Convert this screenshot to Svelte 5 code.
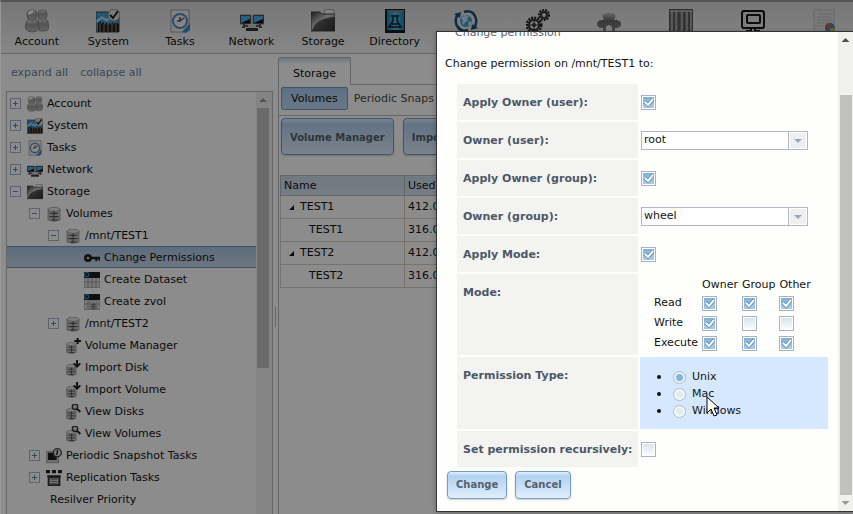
<script>
	const toolbar = [
		{ icon: "account", label: "Account" },
		{ icon: "system", label: "System" },
		{ icon: "tasks", label: "Tasks" },
		{ icon: "network", label: "Network" },
		{ icon: "storage", label: "Storage" },
		{ icon: "directory", label: "Directory" },
		{ icon: "sharing" },
		{ icon: "services" },
		{ icon: "plugins" },
		{ icon: "jails" },
		{ icon: "display" },
		{ icon: "reporting" },
	];

	const tree = [
		{ level: 0, toggle: "+", icon: "account", label: "Account" },
		{ level: 0, toggle: "+", icon: "system", label: "System" },
		{ level: 0, toggle: "+", icon: "tasks", label: "Tasks" },
		{ level: 0, toggle: "+", icon: "network", label: "Network" },
		{ level: 0, toggle: "-", icon: "storage", label: "Storage" },
		{ level: 1, toggle: "-", icon: "disk", label: "Volumes" },
		{ level: 2, toggle: "-", icon: "disk", label: "/mnt/TEST1" },
		{ level: 3, icon: "key", label: "Change Permissions", selected: true },
		{ level: 3, icon: "dataset", label: "Create Dataset" },
		{ level: 3, icon: "zvol", label: "Create zvol" },
		{ level: 2, toggle: "+", icon: "disk", label: "/mnt/TEST2" },
		{ level: 2, icon: "disk-add", label: "Volume Manager" },
		{ level: 2, icon: "disk-import", label: "Import Disk" },
		{ level: 2, icon: "disk-import", label: "Import Volume" },
		{ level: 2, icon: "disk-view", label: "View Disks" },
		{ level: 2, icon: "disk-view", label: "View Volumes" },
		{ level: 1, toggle: "+", icon: "snapshot", label: "Periodic Snapshot Tasks" },
		{ level: 1, toggle: "+", icon: "replication", label: "Replication Tasks" },
		{ level: 1, label: "Resilver Priority" },
	];

	const volumes = [
		{ name: "TEST1", used: "412.0", root: true },
		{ name: "TEST1", used: "316.0" },
		{ name: "TEST2", used: "412.0", root: true },
		{ name: "TEST2", used: "316.0" },
	];

	const who = ["Owner", "Group", "Other"];

	let applyUser = $state(true);
	let applyGroup = $state(true);
	let applyMode = $state(true);
	let recursive = $state(false);
	let user = $state("root");
	let group = $state("wheel");
	let permType = $state("Unix");
	let mode = $state([
		{ name: "Read", bits: [true, true, true] },
		{ name: "Write", bits: [true, false, false] },
		{ name: "Execute", bits: [true, true, true] },
	]);
</script>

{#snippet cylinder()}
	<path d="M3 5v16q9 4 18 0V5z" fill="#c4c4c4" stroke="#888" />
	<ellipse cx="12" cy="5" rx="9" ry="3" fill="#e8e8e8" stroke="#888" />
	<path d="M12 8v13M6 11h12M5 16h14M8 21h9" stroke="#444" stroke-width="1.5" fill="none" />
{/snippet}

{#snippet icon(name)}
	<svg class="icon" viewBox="0 0 24 24" aria-hidden="true">
		{#if name === "account"}
			<g fill="url(#silver)" stroke="#777" stroke-width=".7">
				<path d="M13 11q0-2 2-2h5q3 2 3.500 6v5q-1 2-5 2h-4z" />
				<rect x="13" y="1" width="9" height="9" rx="3.500" />
				<path d="M4 10h6q3 2 3.500 6v4q-1 3-6 3t-7-3v-4q0-4 3.500-6z" />
				<rect x="2" y="1" width="10" height="10" rx="4" />
			</g>
			<path d="M3 5q0-3 3-3.500h3Q8 5 3 6z" fill="#fff" />
		{:else if name === "system"}
			<path d="M0 3h23v20H0z" fill="#4497d0" stroke="#444" />
			<path d="M0 11L6 7l5 3 5-4v3l-5 4-5-3-5 4z" fill="#9cd9fa" />
			<path d="M2 23V14l3-2v3l3-2v3l3-3v3l3-2v2l3-3v3l2-2 4 1v8z" fill="#222" />
			<path d="M4 14v9m4-8v8m4-8v8m4-8v8m4-8v8" stroke="#a87e5e" fill="none" />
			<circle cx="18" cy="6" r="6" fill="#ddd" stroke="#888" />
			<path d="M14 6l3 3 5-7" fill="none" stroke="#222" stroke-width="2" />
		{:else if name === "tasks"}
			<path d="M3 1h18v17l-5 5H3z" fill="#e7e9e9" stroke="#999" />
			<path d="M14 23l8-9v7l-4 3z" fill="#3491c8" />
			<circle cx="12" cy="12" r="7" fill="#f4f4f4" stroke="#548abb" stroke-width="2" />
			<path d="M12 8v4H9m3 0l4-3" fill="none" stroke="#555" stroke-width="1.5" />
		{:else if name === "network"}
			<path d="M0 6h11v9H0zm13 0h11v9H13z" fill="#111" stroke="#888" />
			<path d="M1 7h9v3l-9 4zm13 0h9v3l-9 4z" fill="#48aee9" />
			<path d="M4 15v3H2m18-3v3h2M4 17h16" stroke="#555" stroke-width="2" fill="none" />
			<path d="M8 15h8v4H8z" fill="#ccc" />
			<path d="M6 19h12v3H6z" fill="#333" />
		{:else if name === "storage"}
			<path d="M12 9l2-9 9 1v9z" fill="#eee" stroke="#999" />
			<path d="M0 3h9l2 2h13v17H0z" fill="url(#folder)" stroke="#444" />
			<path d="M1 22q3-13 23-14v14z" fill="#333" opacity=".75" />
		{:else if name === "directory"}
			<path d="M2 0h20v24H2z" fill="#171b1e" />
			<path d="M4 3h17v18H4z" fill="url(#book)" />
			<path d="M4 2h17" stroke="#ddd" />
			<path d="M8 7h8M10 8v4l-4 6h12l-4-6V8m-5 7h6" fill="none" stroke="#171b1e" stroke-width="1.5" />
		{:else if name === "sharing"}
			<circle cx="12" cy="12" r="6" fill="#479bcc" />
			<path d="M7 9l4-3 4 1-2 3 1 2-3 1-1 3-2-2 1-2zM15 12l3 1-2 4-2-1z" fill="#bee6f6" />
			<path d="M4 5Q0 11 3 17l4 4M20 19q4-6 1-12l-3-4M10 3q6-2 10 2M14 21q-6 2-10-2" fill="none" stroke="#195079" stroke-width="2.500" />
			<path d="M0 5l7-2-1 6zM24 19l-7 2 1-6z" fill="#195079" />
		{:else if name === "services"}
			<circle cx="8" cy="16" r="7" fill="none" stroke="#222" stroke-width="3" stroke-dasharray="2 1" />
			<circle cx="8" cy="16" r="5" fill="none" stroke="#333" stroke-width="2" />
			<path d="M8 12v8M4 16h8" stroke="#333" />
			<circle cx="8" cy="16" r="2" fill="#333" />
			<circle cx="18" cy="6" r="5" fill="none" stroke="#222" stroke-width="2" stroke-dasharray="2 1" />
			<circle cx="18" cy="6" r="3" fill="none" stroke="#333" stroke-width="2" />
		{:else if name === "plugins"}
			<path d="M6 5q6-2 12 0 1 4-1 6h3q4 1 4 4t-4 4h-2v5h-3v-6q-3-4-6 0v6H6v-5H4q-4-1-4-4t4-4h3Q5 9 6 5z" fill="url(#steel)" />
		{:else if name === "jails"}
			<path d="M0 0h24v24H0z" fill="#777" stroke="#333" />
			<path d="M1 2h22M3 2v22m4-22v22m6-22v22m5-22v22m4-22v22" stroke="#ccc" />
			<path d="M5 3v21m5-21v21m5-21v21m5-21v21" stroke="#444" />
		{:else if name === "display"}
			<rect x="1" y="2" width="22" height="17" rx="2" fill="none" stroke="#151515" stroke-width="2" />
			<rect x="6" y="6" width="13" height="8" rx="1" fill="none" stroke="#151515" stroke-width="2" />
			<path d="M10 19v3H5m9-3v3h5" stroke="#151515" stroke-width="2" fill="none" />
		{:else if name === "reporting"}
			<path d="M2 1h20v23H2z" fill="#ddd" stroke="#bbb" />
			<path d="M6 5h13M5 8h15M5 11h15M5 14h15M5 17h7" stroke="#bbb" />
			<circle cx="18" cy="19" r="5" fill="#3f86c5" />
			<path d="M18 19l-5 0q0-5 5-5z" fill="#d6563e" />
			<path d="M18 19h5q0 5-6 5z" fill="#d2ab42" />
		{:else if name === "disk"}
			{@render cylinder()}
		{:else if name === "key"}
			<circle cx="6" cy="12" r="4" fill="none" stroke="#222" stroke-width="4" />
			<path d="M10 10h14v6h-2v-2h-2v3h-3v-3h-7z" fill="#222" />
		{:else if name === "dataset" || name === "zvol"}
			<path d="M0 1h24v22H0z" fill="#ddd" stroke="#888" />
			<path d="M0 15h24M6 9v14m6-14v14m6-14v14" stroke="#888" fill="none" />
			<path d="M0 0h24v9H0z" fill="#1c1c1c" />
			<circle cx="4" cy="4" r="3" fill="none" stroke="#2e93bd" stroke-width="2" />
			{#if name === "zvol"}
				<g transform="translate(7 9) scale(.6)">{@render cylinder()}</g>
			{/if}
		{:else if name.startsWith("disk-")}
			<g transform="translate(0 5) scale(.8)">{@render cylinder()}</g>
			{#if name === "disk-add"}
				<path d="M19 0v9M14 4.500h10" stroke="#222" stroke-width="3" />
			{:else if name === "disk-import"}
				<path d="M18 0v8M13 5l5 5 5-5" fill="none" stroke="#222" stroke-width="3" />
			{:else}
				<circle cx="15" cy="4" r="4" fill="#ddd" stroke="#333" stroke-width="2" />
				<path d="M18 7l5 5" stroke="#222" stroke-width="3" />
			{/if}
		{:else if name === "snapshot"}
			<path d="M1 5h18v17H1z" fill="#ccc" stroke="#888" />
			<path d="M3 7h13v11H3z" fill="#1c1c1c" />
			<circle cx="17" cy="7" r="6" fill="#ddd" stroke="#444" stroke-width="2" />
			<path d="M17 3v5l-2 2" fill="none" stroke="#222" stroke-width="2" />
		{:else if name === "replication"}
			<path d="M0 0h6v5H0zm9 0h6v5H9zm9 0h6v5h-6zM2 8h20v3H2z" fill="#222" />
			<path d="M4 11h16v12H4z" fill="#ddd" stroke="#333" stroke-width="3" />
			<path d="M7 14h10M7 17h10M7 20h10" stroke="#333" />
		{/if}
	</svg>
{/snippet}

<svg class="defs" width="0" height="0" aria-hidden="true">
	<linearGradient id="silver" x2="0" y2="1">
		<stop stop-color="#ddd" /><stop offset=".45" stop-color="#999" /><stop offset="1" stop-color="#bbb" />
	</linearGradient>
	<linearGradient id="steel" x2="0" y2="1">
		<stop stop-color="#bbb" /><stop offset=".4" stop-color="#666" /><stop offset="1" stop-color="#888" />
	</linearGradient>
	<linearGradient id="folder" x2="1" y2="1">
		<stop stop-color="#333" /><stop offset=".45" stop-color="#ccc" /><stop offset="1" stop-color="#222" />
	</linearGradient>
	<linearGradient id="book">
		<stop stop-color="#1682b6" /><stop offset=".5" stop-color="#51bce9" /><stop offset="1" stop-color="#1682b6" />
	</linearGradient>
</svg>

<div class="page">
	<nav class="toolbar">
		{#each toolbar as item}
			<a href="#{item.icon}" aria-label={item.icon}>
				{@render icon(item.icon)}
				{#if item.label}<span>{item.label}</span>{/if}
			</a>
		{/each}
	</nav>

	<div class="body">
		<aside>
			<div class="links">
				<a href="#expand">expand all</a>
				<a href="#collapse">collapse all</a>
			</div>
			<div class="tree">
				<ul>
					{#each tree as node}
						<li class:selected={node.selected} style="padding-left: {3 + node.level * 19}px">
							<span class="toggle" class:boxed={node.toggle} class:plus={node.toggle === "+"}></span>
							{#if node.icon}{@render icon(node.icon)}{/if}
							<span class="label">{node.label}</span>
						</li>
					{/each}
				</ul>
				<div class="tree-scroll">
					<i class="up"></i>
					<div class="thumb"></div>
				</div>
			</div>
		</aside>
		<div class="splitter"><i></i></div>

		<main>
			<div class="tabs"><button class="tab">Storage</button></div>
			<div class="pane">
				<div class="subtabs">
					<button class="active">Volumes</button>
					<button>Periodic Snaps</button>
				</div>
				<div class="actions">
					<button class="btn">Volume Manager</button>
					<button class="btn">Import</button>
				</div>
				<table class="grid">
					<thead>
						<tr><th>Name</th><th>Used</th></tr>
					</thead>
					<tbody>
						{#each volumes as v}
							<tr>
								<td class:child={!v.root}>{#if v.root}<i class="expando"></i>{/if}{v.name}</td>
								<td>{v.used}</td>
							</tr>
						{/each}
					</tbody>
				</table>
			</div>
		</main>
	</div>

	<div class="underlay"></div>

	<div class="dialog" role="dialog" aria-label="Change permission">
		<form>
			<div class="title"><span>Change permission</span></div>
			<p>Change permission on /mnt/TEST1 to:</p>
			<div class="fields">
				<label class="name" for="apply-user">Apply Owner (user):</label>
				<div class="value"><input type="checkbox" id="apply-user" bind:checked={applyUser} /></div>

				<label class="name" for="user">Owner (user):</label>
				<div class="value">
					<select id="user" bind:value={user}><option>root</option></select>
				</div>

				<label class="name" for="apply-group">Apply Owner (group):</label>
				<div class="value"><input type="checkbox" id="apply-group" bind:checked={applyGroup} /></div>

				<label class="name" for="group">Owner (group):</label>
				<div class="value">
					<select id="group" bind:value={group}><option>wheel</option></select>
				</div>

				<label class="name" for="apply-mode">Apply Mode:</label>
				<div class="value"><input type="checkbox" id="apply-mode" bind:checked={applyMode} /></div>

				<div class="name">Mode:</div>
				<div class="value">
					<table class="mode">
						<thead>
							<tr>
								<td></td>
								{#each who as w}<th>{w}</th>{/each}
							</tr>
						</thead>
						<tbody>
							{#each mode as row}
								<tr>
									<th>{row.name}</th>
									{#each row.bits as _, i}
										<td><input type="checkbox" aria-label="{who[i]} {row.name}" bind:checked={row.bits[i]} /></td>
									{/each}
								</tr>
							{/each}
						</tbody>
					</table>
				</div>

				<div class="name">Permission Type:</div>
				<div class="value hovered">
					<ul class="types">
						{#each ["Unix", "Mac", "Windows"] as t}
							<li><label><input type="radio" name="type" value={t} bind:group={permType} />{t}</label></li>
						{/each}
					</ul>
				</div>

				<label class="name" for="recursive">Set permission recursively:</label>
				<div class="value"><input type="checkbox" id="recursive" bind:checked={recursive} /></div>
			</div>
			<div class="buttons">
				<button type="button" class="btn">Change</button>
				<button type="button" class="btn">Cancel</button>
			</div>
		</form>
		<div class="dialog-scroll">
			<i class="up"></i>
			<div class="thumb"></div>
			<i class="down"></i>
		</div>
		<svg class="pointer" width="14" height="22" viewBox="0 0 14 22" aria-hidden="true">
			<path d="M1 1v16l4-4 3 7 3-1-3-7h5z" fill="#fff" stroke="#000" />
		</svg>
	</div>
</div>

<style>
	:global(body) {
		margin: 0;
	}

	.page {
		position: relative;
		display: flex;
		flex-direction: column;
		height: 100vh;
		box-sizing: border-box;
		overflow: hidden;
		border-top: 2px solid #555;
		border-left: 1px solid #999;
		background: #fff;
		color: #131313;
		font: 11px/16px "DejaVu Sans", Verdana, sans-serif;
	}

	.defs {
		position: absolute;
	}

	button,
	select {
		font: inherit;
		color: inherit;
	}

	ul {
		list-style: none;
		margin: 0;
		padding: 0;
	}

	/* toolbar */
	.toolbar {
		display: grid;
		grid-template-columns: repeat(12, 1fr);
		flex: none;
		height: 51px;
		margin-right: -7px;
		border-bottom: 1px solid #bbb;
		background: linear-gradient(#d8d8d8, #f6f6f6);
	}

	.toolbar a {
		display: flex;
		flex-direction: column;
		align-items: center;
		gap: 1px;
		padding-top: 7px;
		color: #131313;
		text-decoration: none;
	}

	.toolbar .icon {
		width: 24px;
		height: 24px;
	}

	.body {
		display: flex;
		flex: 1;
		min-height: 0;
	}

	/* left pane */
	aside {
		display: flex;
		flex-direction: column;
		width: 267px;
		padding-left: 5px;
	}

	.links {
		display: flex;
		gap: 12px;
		padding: 11px 5px 10px;
	}

	.links a {
		color: #6684a6;
		text-decoration: none;
	}

	.tree {
		display: flex;
		flex: 1;
		min-height: 0;
		overflow: hidden;
		border: 1px solid #bbb;
		border-bottom: 0;
	}

	.tree ul {
		flex: 1;
	}

	.tree li {
		display: flex;
		align-items: center;
		height: 22px;
		box-sizing: border-box;
		white-space: nowrap;
	}

	.tree li.selected {
		border: solid #759dc0;
		border-width: 1px 0;
		background: linear-gradient(#a9c5e4, #c9d9ea);
	}

	.tree .icon {
		flex: none;
		width: 16px;
		height: 16px;
		margin-top: 2px;
	}

	.tree .label {
		margin-left: 4px;
		padding-top: 2px;
	}

	.toggle {
		box-sizing: border-box;
		flex: none;
		width: 11px;
		height: 11px;
		margin: 1px 6px 0 0;
	}

	.toggle.boxed {
		border: 1px solid #a5b4ca;
		background: linear-gradient(#6a83a5, #6a83a5) center / 5px 1px no-repeat;
	}

	.toggle.plus {
		background:
			linear-gradient(#6a83a5, #6a83a5) center / 5px 1px no-repeat,
			linear-gradient(#6a83a5, #6a83a5) center / 1px 5px no-repeat;
	}

	.tree-scroll {
		display: flex;
		flex-direction: column;
		align-items: center;
		width: 14px;
		padding-right: 2px;
		background: #f0f0f0;
	}

	.tree-scroll .thumb {
		width: 12px;
		height: 260px;
		background: #c1c1c1;
	}

	.up,
	.down {
		flex: none;
		width: 8px;
		height: 4px;
		margin: 6px 0;
		background: #505050;
		clip-path: polygon(50% 0, 100% 100%, 0 100%);
	}

	.tree-scroll .up {
		background: #999;
	}

	.down {
		background: #999;
		clip-path: polygon(0 0, 100% 0, 50% 100%);
	}

	.splitter {
		display: flex;
		align-items: center;
		justify-content: center;
		width: 5px;
	}

	.splitter i {
		width: 1px;
		height: 20px;
		margin-top: 66px;
		background: #b5bcc7;
	}

	/* right pane */
	main {
		flex: 1;
		display: flex;
		flex-direction: column;
		min-width: 0;
		padding-top: 3px;
	}

	.tabs {
		display: flex;
	}

	.tabs::after {
		content: "";
		flex: 1;
		border-bottom: 1px solid #b5bcc7;
	}

	.tab {
		height: 28px;
		padding: 4px 14px 0;
		border: 1px solid #b5bcc7;
		border-bottom: 0;
		border-radius: 2px 2px 0 0;
		background: linear-gradient(#c5d8ee, #fff 6px);
	}

	.pane {
		flex: 1;
		border-left: 1px solid #b5bcc7;
	}

	.subtabs {
		display: flex;
		gap: 4px;
		padding: 2px 2px 5px;
		border-bottom: 1px solid #b5bcc7;
		white-space: nowrap;
	}

	.subtabs button {
		height: 23px;
		padding: 0 2px;
		border: 0;
		background: none;
		color: #494949;
	}

	.subtabs .active {
		padding: 0 9px;
		border: 1px solid #759dc0;
		border-radius: 2px;
		background: linear-gradient(#a9cbee, #c2dcf5);
		color: #131313;
	}

	.btn {
		border: 1px solid #759dc0;
		border-radius: 4px;
		background: linear-gradient(#e4f0fc, #b2d2f3 15%, #e0eefc);
		box-shadow: 0 1px 2px rgba(0, 0, 0, 0.2);
		color: #56616b;
		font-size: 10px;
		font-weight: bold;
		white-space: nowrap;
	}

	.actions {
		display: flex;
		gap: 9px;
		padding: 2px 2px 20px;
	}

	.actions .btn {
		height: 37px;
		padding: 2px 8px 0;
	}

	.grid {
		width: 100%;
		margin-left: 1px;
		border-collapse: collapse;
		table-layout: fixed;
		border: 1px solid #b5bcc7;
	}

	.grid th,
	.grid td {
		box-sizing: border-box;
		height: 23px;
		padding: 0 3px;
		border: 1px solid #dccfc0;
		text-align: left;
		font-weight: normal;
	}

	.grid th {
		height: 20px;
		border-color: #b5bcc7;
		background: linear-gradient(#ccdbea, #d8e4f0);
	}

	.grid th:first-child {
		width: 124px;
	}

	.grid .child {
		padding-left: 28px;
	}

	.expando {
		display: inline-block;
		width: 5px;
		height: 5px;
		margin: 0 6px 0 5px;
		background: #131313;
		clip-path: polygon(100% 0, 100% 100%, 0 100%);
	}

	.underlay {
		position: absolute;
		inset: -2px 0 0 -1px;
		background: rgba(0, 0, 0, 0.45);
	}

	/* dialog */
	.dialog {
		position: absolute;
		top: 29px;
		left: 435px;
		right: 0;
		display: flex;
		border: 1px solid #333;
		border-right: 0;
		background: #fefefd;
		box-shadow: 0 1px 5px rgba(0, 0, 0, 0.25);
	}

	form {
		flex: 1;
		padding: 0 10px 12px 8px;
	}

	.title {
		display: flex;
		align-items: flex-end;
		height: 9px;
		margin-left: 10px;
		overflow: hidden;
		color: #5a6570;
	}

	p {
		margin: 15px 0 12px;
	}

	.fields {
		display: grid;
		grid-template-columns: 181px 1fr;
		gap: 2px;
		margin-left: 12px;
	}

	.name {
		padding: 11px 6px 9px;
		background: #f3f3f2;
		color: #4c5866;
		font-weight: bold;
		white-space: nowrap;
	}

	.value {
		display: flex;
		align-items: center;
		padding: 0 1px;
	}

	.hovered {
		background: #d5e8fe;
	}

	input[type="checkbox"] {
		appearance: none;
		display: block;
		box-sizing: border-box;
		width: 15px;
		height: 15px;
		margin: 0;
		border: 1px solid #a8b2c0;
		padding: 1px;
		background: linear-gradient(#d9e3ec, #fbfcfd) content-box;
	}

	input[type="checkbox"]:checked {
		background:
			url("data:image/svg+xml,%3Csvg xmlns='http://www.w3.org/2000/svg' viewBox='0 0 11 11'%3E%3Cpath d='M2 5l3 3 5-6' fill='none' stroke='%234f81a8' stroke-width='3.500'/%3E%3Cpath d='M2 5l3 3 5-6' fill='none' stroke='%23fff' stroke-width='2'/%3E%3C/svg%3E") center / 11px no-repeat,
			linear-gradient(#7fb0d8, #a8cdea) content-box;
	}

	select {
		appearance: none;
		box-sizing: border-box;
		width: 167px;
		height: 19px;
		padding: 0 22px 0 2px;
		border: 1px solid #b0b8c8;
		border-radius: 0;
		color: #131313;
		background: #fff
			url("data:image/svg+xml,%3Csvg xmlns='http://www.w3.org/2000/svg' width='19' height='17'%3E%3Cpath d='M0 0h1v17H0z' fill='%23b0b8c8'/%3E%3Cpath d='M2 1h16v15H2z' fill='%23efefef'/%3E%3Cpath d='M6 7h8l-4 4z' fill='%2393a7c8'/%3E%3C/svg%3E") right center no-repeat;
	}

	.mode {
		margin: 0 0 2px 12px;
		border-collapse: collapse;
	}

	.mode th,
	.mode td {
		height: 20px;
		padding: 0 3px 0 1px;
		font-weight: normal;
		text-align: left;
	}

	.mode thead th {
		height: 16px;
		padding-top: 3px;
	}

	.mode thead td {
		height: 16px;
	}

	.types {
		padding: 12px 0 9px 32px;
	}

	.types li {
		position: relative;
		height: 17px;
	}

	.types li::before {
		content: "";
		position: absolute;
		top: 6px;
		left: -16px;
		width: 4px;
		height: 4px;
		border-radius: 50%;
		background: #131313;
	}

	.types label {
		display: flex;
		align-items: center;
		gap: 6px;
		line-height: 16px;
	}

	input[type="radio"] {
		appearance: none;
		box-sizing: border-box;
		width: 13px;
		height: 13px;
		margin: 0;
		border: 1px solid #b0bccb;
		border-radius: 50%;
		background: radial-gradient(#e2eaf2 3px, #f5f8fb 4px);
	}

	input[type="radio"]:checked {
		background: radial-gradient(#84b4d9 3px, #e8f1f8 4px);
	}

	.buttons {
		display: flex;
		gap: 8px;
		margin: 4px 0 0 2px;
	}

	.buttons .btn {
		height: 28px;
		padding: 0 8px;
	}

	.dialog-scroll {
		display: flex;
		flex-direction: column;
		align-items: center;
		width: 15px;
		background: #f0f0ef;
	}

	.dialog-scroll .thumb {
		flex: 1;
		width: 12px;
		margin-top: 47px;
		background: #c0c0be;
	}

	.pointer {
		position: absolute;
		top: 364px;
		left: 269px;
	}
</style>
